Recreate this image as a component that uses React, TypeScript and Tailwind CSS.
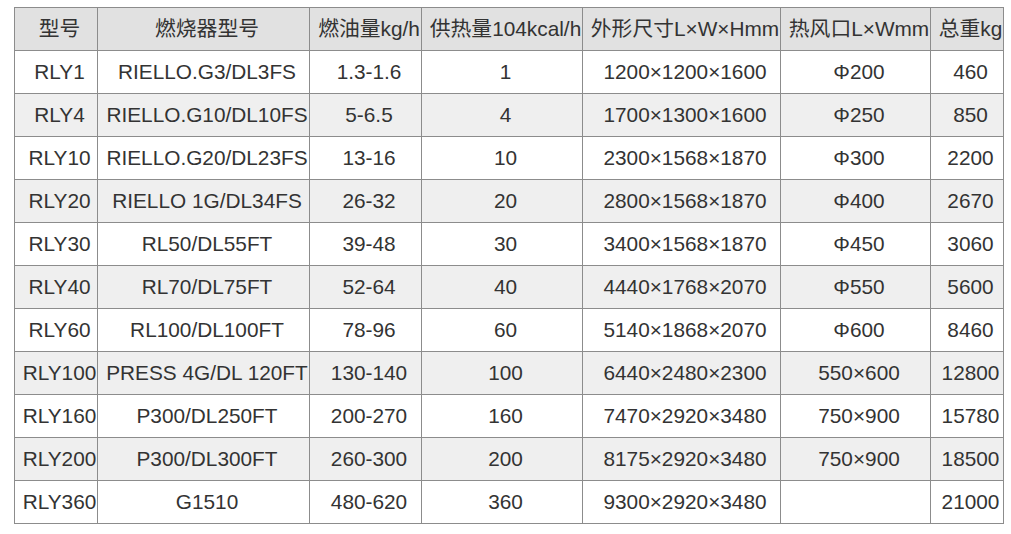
const headers = [
  "型号",
  "燃烧器型号",
  "燃油量kg/h",
  "供热量104kcal/h",
  "外形尺寸L×W×Hmm",
  "热风口L×Wmm",
  "总重kg",
];

const widths = ["w-[83px]", "w-[212px]", "w-[112px]", "w-[161px]", "w-[198px]", "w-[150px]", "w-[73px]"];

const rows: string[][] = [
  ["RLY1", "RIELLO.G3/DL3FS", "1.3-1.6", "1", "1200×1200×1600", "Φ200", "460"],
  ["RLY4", "RIELLO.G10/DL10FS", "5-6.5", "4", "1700×1300×1600", "Φ250", "850"],
  ["RLY10", "RIELLO.G20/DL23FS", "13-16", "10", "2300×1568×1870", "Φ300", "2200"],
  ["RLY20", "RIELLO 1G/DL34FS", "26-32", "20", "2800×1568×1870", "Φ400", "2670"],
  ["RLY30", "RL50/DL55FT", "39-48", "30", "3400×1568×1870", "Φ450", "3060"],
  ["RLY40", "RL70/DL75FT", "52-64", "40", "4440×1768×2070", "Φ550", "5600"],
  ["RLY60", "RL100/DL100FT", "78-96", "60", "5140×1868×2070", "Φ600", "8460"],
  ["RLY100", "PRESS 4G/DL 120FT", "130-140", "100", "6440×2480×2300", "550×600", "12800"],
  ["RLY160", "P300/DL250FT", "200-270", "160", "7470×2920×3480", "750×900", "15780"],
  ["RLY200", "P300/DL300FT", "260-300", "200", "8175×2920×3480", "750×900", "18500"],
  ["RLY360", "G1510", "480-620", "360", "9300×2920×3480", "", "21000"],
];

const App = () => {
  return (
    <div className="min-h-[534px] bg-white pl-[14px] pt-[7px] font-['Liberation_Sans','Noto_Sans_CJK_SC',sans-serif] text-[20.8px] text-[#333]">
      <table className="table-fixed border-collapse w-[990px]">
        <colgroup>
          {widths.map((w, i) => (
            <col key={i} className={w} />
          ))}
        </colgroup>
        <thead>
          <tr className="bg-[#e1e1e1]">
            {headers.map((h, i) => (
              <th
                key={i}
                className="h-[43px] pl-[7px] pr-0 py-0 border border-[#8c8c8c] font-normal text-center whitespace-nowrap overflow-hidden leading-none"
              >
                {h}
              </th>
            ))}
          </tr>
        </thead>
        <tbody>
          {rows.map((r, i) => (
            <tr key={i} className={i % 2 === 1 ? "bg-[#efefef]" : "bg-white"}>
              {r.map((c, j) => (
                <td
                  key={j}
                  className="h-[43px] pl-[7px] pr-0 py-0 border border-[#8c8c8c] text-center whitespace-nowrap leading-none"
                >
                  {c}
                </td>
              ))}
            </tr>
          ))}
        </tbody>
      </table>
    </div>
  );
};

export default App;
